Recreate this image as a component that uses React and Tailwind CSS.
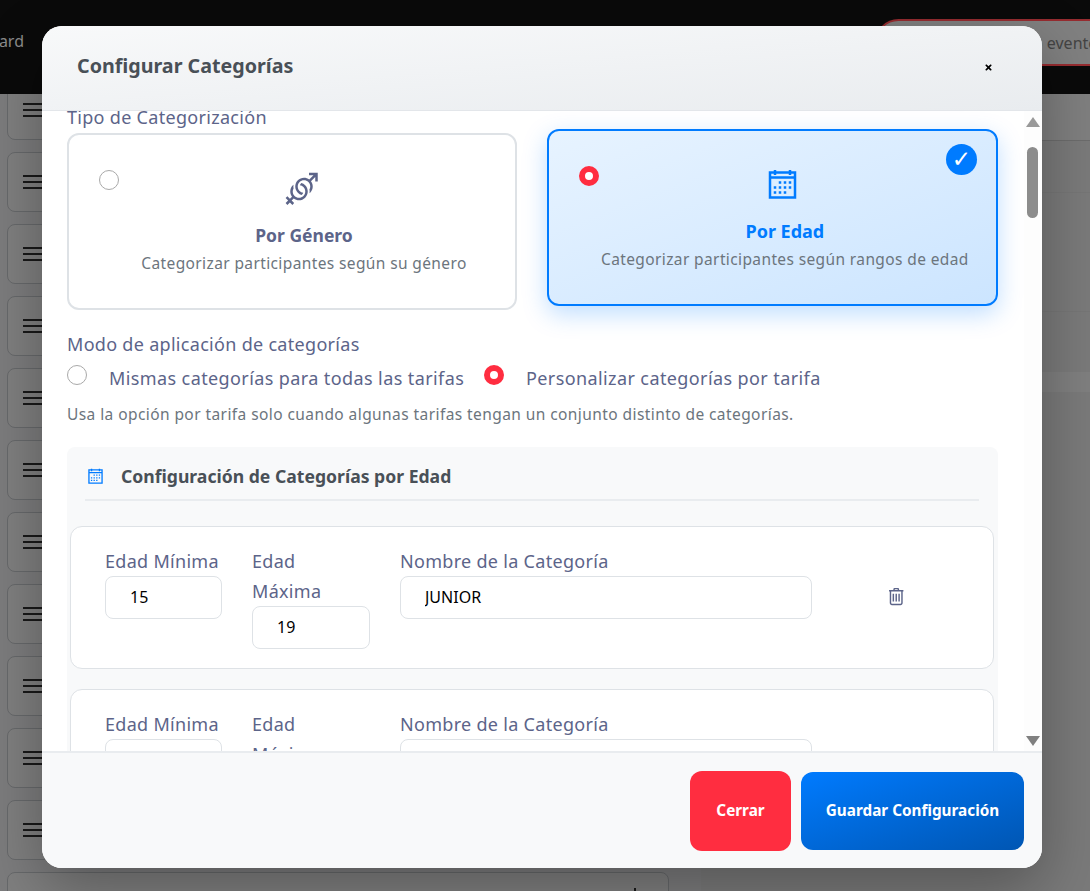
import React from 'react';
import { FaTimes } from 'react-icons/fa';
import { LiaVenusMarsSolid, LiaCalendarAltSolid, LiaCalendarAlt, LiaTrashAlt } from 'react-icons/lia';

const Radio = ({ checked }) => (
  <input
    type="radio"
    checked={checked}
    readOnly
    className={`block w-5 h-5 shrink-0 appearance-none rounded-full bg-white ${checked ? 'border-[6px] border-[#ff2d40]' : 'border border-[#a9a9a9]'}`}
  />
);

// One row of the age table
const AgeRow = ({ min, max, name }) => (
  <div className="h-[143px] rounded-xl border border-[#dee2e6] bg-white pl-[34px] pt-[19px] grid grid-cols-[117px_118px_412px_108px] gap-x-[30px] items-start">
    <div>
      <label className="block text-[18px] leading-[30px] tracking-[0.3px] text-[#5c6489]">Edad Mínima</label>
      <input readOnly value={min} className="block w-full h-[43px] rounded-lg border border-[#dee2e6] bg-white pl-[24px] pb-[2px] text-[16px] text-black outline-none" />
    </div>
    <div>
      <label className="block max-w-[90px] text-[18px] leading-[30px] tracking-[0.3px] text-[#5c6489]">Edad Máxima</label>
      <input readOnly value={max} className="block w-full h-[43px] rounded-lg border border-[#dee2e6] bg-white pl-[24px] pb-[2px] text-[16px] text-black outline-none" />
    </div>
    <div>
      <label className="block text-[18px] leading-[30px] tracking-[0.3px] text-[#5c6489]">Nombre de la Categoría</label>
      <input readOnly value={name} className="block w-full h-[43px] rounded-lg border border-[#dee2e6] bg-white pl-[24px] pb-[2px] text-[16px] text-black outline-none" />
    </div>
    <div className="flex justify-center pt-[39px] pr-[2px]">
      <LiaTrashAlt size={23} className="text-[#5c6489]" />
    </div>
  </div>
);

// The page behind the modal
const Background = () => (
  <div className="absolute inset-0 flex bg-[#f8f9fa] pt-[80px] pl-[7px]">
    <div className="w-[662px] flex flex-col gap-3 shrink-0">
      {Array.from({ length: 11 }).map((_, i) => (
        <div key={i} className="h-[60px] shrink-0 rounded-lg border border-[#cfd2d6] bg-white pl-[15px] pt-[22px]">
          <div className="flex w-[24px] flex-col gap-[4px]">
            <span className="h-[2px] bg-[#333]" />
            <span className="h-[2px] bg-[#333]" />
            <span className="h-[2px] bg-[#333]" />
          </div>
        </div>
      ))}
      <div className="flex h-[60px] shrink-0 justify-end rounded-lg border border-[#cfd2d6] bg-white pr-[32px] pt-[15px]">
        <span className="h-[4px] w-[2px] bg-[#333]" />
      </div>
    </div>
    <div className="ml-[32px] flex-1 flex flex-col bg-white pt-[14px]">
      <div className="h-[47px] border-b border-[#d8d8d8]" />
      <div className="h-[52px] border-b border-[#ececec] bg-[#f4f4f4]" />
      <div className="h-[119px] border-b border-[#ececec] bg-[#f4f4f4]" />
      <div className="h-[60px] bg-[#f4f4f4]" />
      <div className="h-[20px] bg-white" />
      <div className="flex-1 bg-[#f4f4f4]" />
    </div>
  </div>
);

const Navbar = () => (
  <div className="absolute inset-x-0 top-0 z-20 h-[94px] overflow-hidden bg-[#0a0a0a] flex items-start justify-between">
    <div className="mt-[30px] w-[24px] flex justify-end overflow-hidden whitespace-nowrap text-[16px] leading-[22px] text-[#8a8a8a]">Dashboard</div>
    <div className="mt-[19px] -mr-[30px] h-[47px] w-[245px] rounded-[25px] border-2 border-[#962c30] bg-[#808080] flex items-center justify-end pr-[20px] whitespace-nowrap text-[16px] text-[#444]">
      Crear nuevo evento
    </div>
  </div>
);

export default function App() {
  return (
    <div className="relative h-[891px] overflow-hidden font-['Noto_Sans',sans-serif]">
      <Background />
      <div className="absolute inset-0 z-10 bg-black/50" />
      <Navbar />

      <div className="absolute inset-0 z-30 pt-[26px] pl-[42px]">
        <div className="flex h-[842px] w-[1000px] flex-col overflow-hidden rounded-[20px] bg-white shadow-[0_20px_60px_rgba(0,0,0,0.3)]">
          {/* Header */}
          <div className="flex h-[85px] shrink-0 items-center justify-between border-b border-[#e3e6ea] bg-gradient-to-br from-[#f8f9fa] to-[#e9ecef] pb-[4px] pl-[35px] pr-[49px]">
            <h2 className="text-[19.7px] font-bold text-[#495057]">Configurar Categorías</h2>
            <FaTimes size={9} className="mt-[2px] text-black" />
          </div>

          {/* Body */}
          <div className="relative flex-1 overflow-hidden pl-[25px] pr-[44px]">
            <div className="-mt-[7px]">
              <div className="h-[27px] mb-[2px] text-[18px] leading-[27px] tracking-[0.3px] text-[#5c6489]">Tipo de Categorización</div>

              <div className="grid grid-cols-[450px_451px] gap-[30px]">
                <div className="flex h-[177px] rounded-xl border-2 border-[#dee2e6] bg-white pt-[35px] pl-[30px] pr-[28px]">
                  <Radio />
                  <div className="ml-[2px] flex flex-1 flex-col items-center">
                    <LiaVenusMarsSolid size={40} className="-mt-[1px] mb-[13px] -translate-x-[2.5px] text-[#5c6489]" />
                    <div className="text-[17.5px] leading-[27px] font-bold text-[#5c6489]">Por Género</div>
                    <div className="mt-[3px] whitespace-nowrap text-[15.5px] leading-[22px] tracking-[0.38px] text-[#6c757d]">Categorizar participantes según su género</div>
                  </div>
                </div>

                <div className="relative flex h-[177px] -translate-y-1 rounded-xl border-2 border-[#007bff] bg-gradient-to-br from-[#e7f3ff] to-[#cce5ff] pt-[35px] pl-[30px] pr-[28px] shadow-[0_8px_25px_rgba(0,123,255,0.25)]">
                  <Radio checked />
                  <div className="ml-[2px] flex flex-1 flex-col items-center">
                    <LiaCalendarAltSolid size={40} className="-mt-[1px] mb-[13px] -translate-x-[2.5px] text-[#007bff]" />
                    <div className="text-[18px] leading-[27px] font-bold text-[#007bff]">Por Edad</div>
                    <div className="mt-[3px] whitespace-nowrap text-[15.5px] leading-[22px] tracking-[0.38px] text-[#6c757d]">Categorizar participantes según rangos de edad</div>
                  </div>
                  <span className="absolute right-[19px] top-[13px] flex h-[31px] w-[31px] items-center justify-center rounded-full bg-[#007bff] font-['DejaVu_Sans',sans-serif] text-[23px] font-bold leading-none text-white">✓</span>
                </div>
              </div>

              <div className="mt-[21px] h-[27px] text-[18px] leading-[27px] tracking-[0.3px] text-[#5c6489]">Modo de aplicación de categorías</div>
              <div className="mt-[7px] flex items-start text-[18px] leading-[27px] tracking-[0.4px] text-[#5c6489]">
                <Radio />
                <span className="ml-[22px] w-[355px] whitespace-nowrap">Mismas categorías para todas las tarifas</span>
                <span className="ml-[20px]"><Radio checked /></span>
                <span className="ml-[22px] whitespace-nowrap">Personalizar categorías por tarifa</span>
              </div>
              <p className="mt-[11px] h-[22px] whitespace-nowrap text-[15.5px] leading-[22px] tracking-[0.42px] text-[#6c757d]">Usa la opción por tarifa solo cuando algunas tarifas tengan un conjunto distinto de categorías.</p>

              {/* Age categories */}
              <div className="mt-[22px] rounded-lg bg-[#f8f9fa] pl-[3px] pr-[4px] pb-5">
                <div className="mx-[15px] flex h-[54px] items-center gap-[15px] border-b-2 border-[#e9ecef] pt-[6px]">
                  <LiaCalendarAlt size={21} className="text-[#007bff]" />
                  <h3 className="text-[17.6px] font-bold text-[#495057]">Configuración de Categorías por Edad</h3>
                </div>
                <div className="mt-[25px] flex flex-col gap-5">
                  <AgeRow min="15" max="19" name="JUNIOR" />
                  <AgeRow min="20" max="29" name="SENIOR" />
                </div>
              </div>
            </div>

            {/* Scrollbar */}
            <div className="absolute inset-y-0 right-0 w-[18px] bg-[#fdfdfd]">
              <svg width="14" height="10" viewBox="0 0 14 10" className="absolute left-[2px] top-[6px]"><path d="M7 0 L14 10 L0 10 Z" fill="#999" /></svg>
              <div className="absolute left-[3px] top-[36px] h-[71px] w-[11px] rounded-full bg-[#8c8c8c]" />
              <svg width="14" height="10" viewBox="0 0 14 10" className="absolute left-[2px] top-[625px]"><path d="M0 0 L14 0 L7 10 Z" fill="#808080" /></svg>
            </div>
          </div>

          {/* Footer */}
          <div className="flex h-[117px] shrink-0 items-center justify-end gap-[10px] border-t-2 border-[#e9ecef] bg-[#f8f9fa] pr-[18px]">
            <button className="h-[80px] w-[101px] rounded-xl bg-[#ff2d40] text-[15.3px] font-bold text-white">Cerrar</button>
            <button className="h-[78px] w-[223px] rounded-xl bg-gradient-to-br from-[#007bff] to-[#0056b3] text-[15.3px] font-bold text-white">Guardar Configuración</button>
          </div>
        </div>
      </div>
    </div>
  );
}
